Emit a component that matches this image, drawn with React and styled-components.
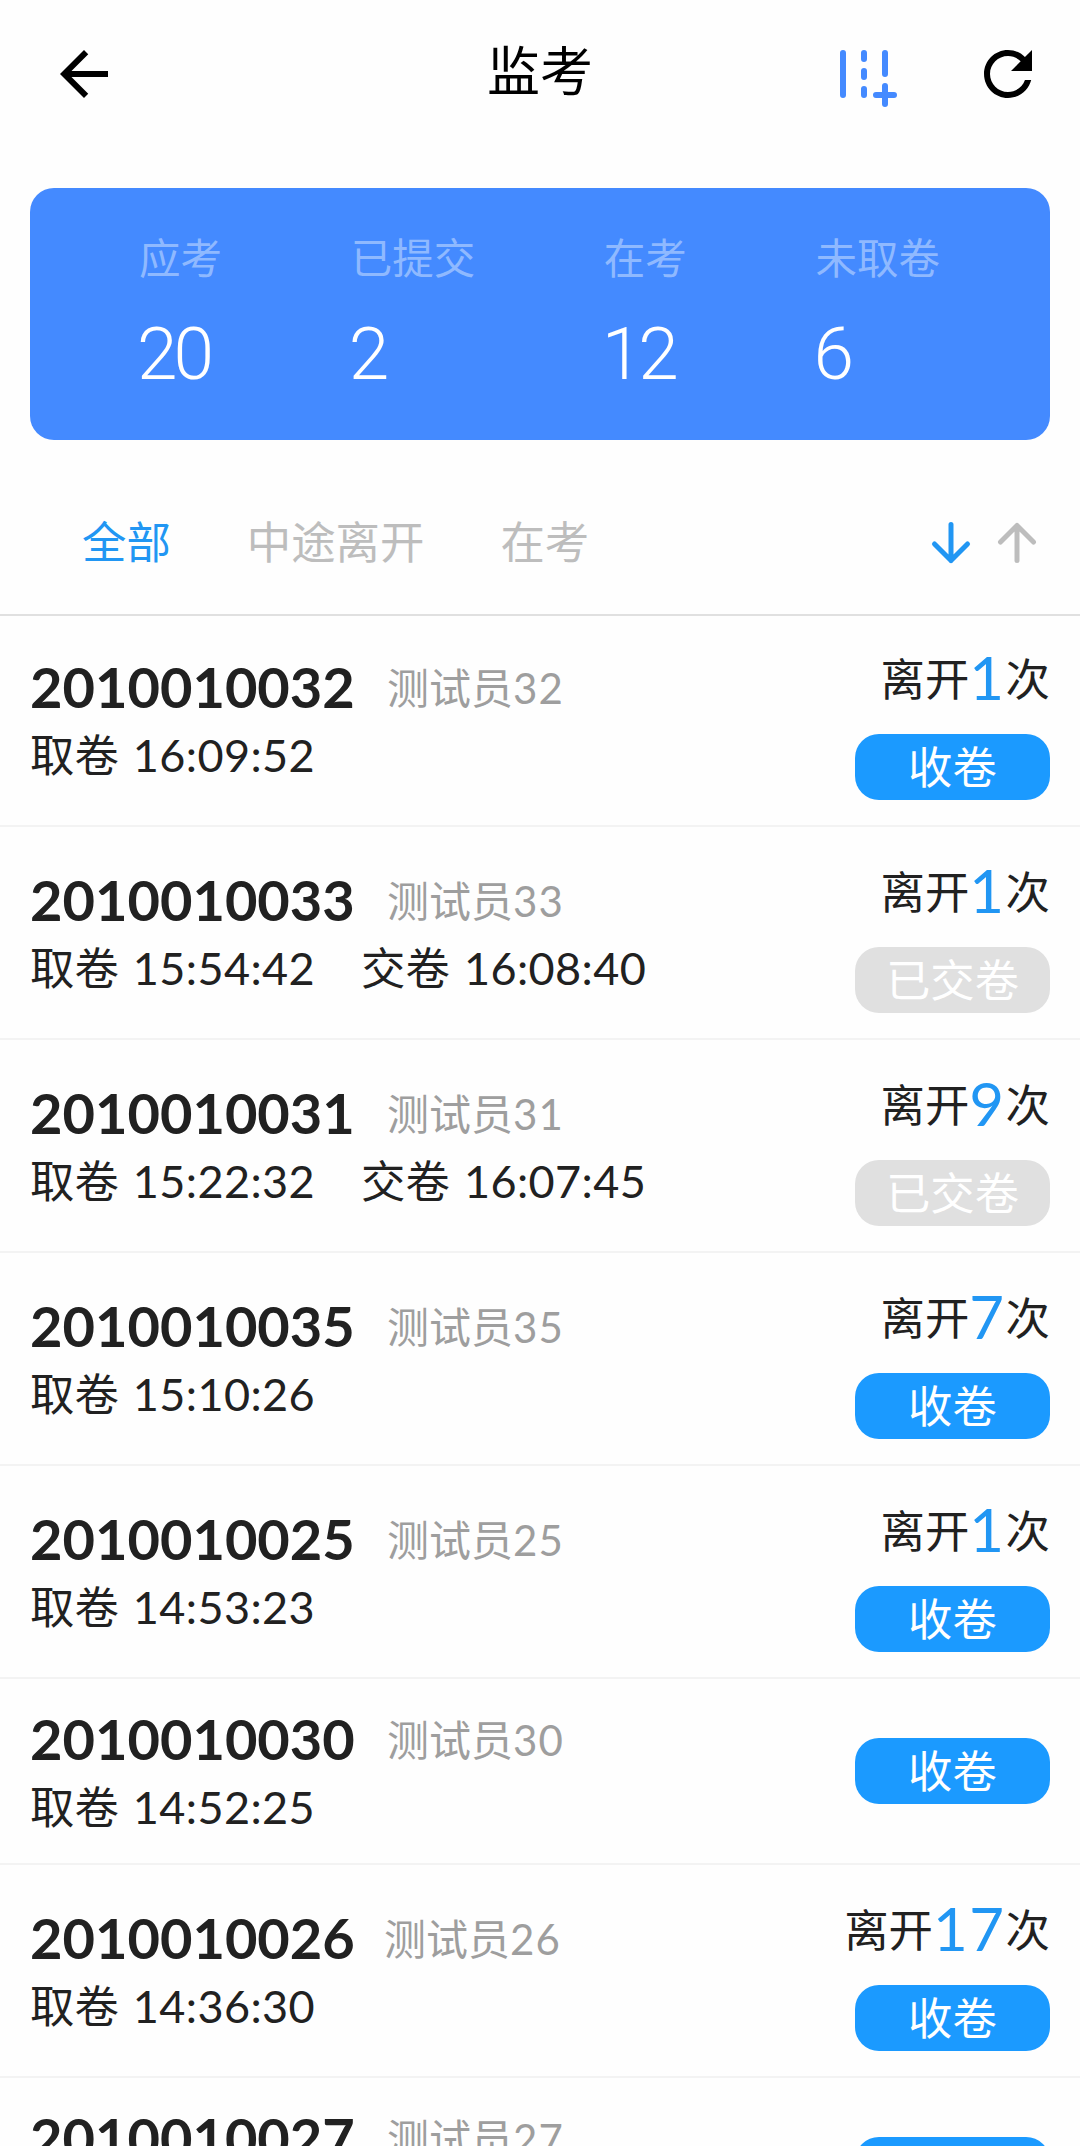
import React from 'react';
import styled, { createGlobalStyle } from 'styled-components';

const GlobalStyle = createGlobalStyle`
  * { box-sizing: border-box; }
  body {
    margin: 0;
    background: #fefefe;
    color: #212121;
    font-family: Lato, 'Noto Sans CJK SC', sans-serif;
    font-size: 44.4px;
    overflow: hidden;
  }
`;

const exams = [
  { id: '2010010032', name: '测试员', no: '32', taken: '16:09:52', left: 1 },
  { id: '2010010033', name: '测试员', no: '33', taken: '15:54:42', submitted: '16:08:40', left: 1 },
  { id: '2010010031', name: '测试员', no: '31', taken: '15:22:32', submitted: '16:07:45', left: 9 },
  { id: '2010010035', name: '测试员', no: '35', taken: '15:10:26', left: 7 },
  { id: '2010010025', name: '测试员', no: '25', taken: '14:53:23', left: 1 },
  { id: '2010010030', name: '测试员', no: '30', taken: '14:52:25', left: 0 },
  { id: '2010010026', name: '测试员', no: '26', taken: '14:36:30', left: 17 },
  { id: '2010010027', name: '测试员', no: '27', taken: '14:35:12', left: 0 },
];

const stats = [
  { label: '应考', value: 20 },
  { label: '已提交', value: 2 },
  { label: '在考', value: 12 },
  { label: '未取卷', value: 6 },
];

const tabs = ['全部', '中途离开', '在考'];

const Page = styled.div`
  height: 2146px;
  overflow: hidden;
`;

// --- Top bar ---
const TopBar = styled.header`
  display: grid;
  grid-template-columns: 1fr auto 1fr;
  align-items: center;
  height: 148px;
  padding: 0 36px 0 48px;
`;

const Title = styled.h1`
  margin: 0;
  padding: 0 12px 6px 0;
  color: #000;
  font-size: 53px;
  font-weight: 400;
  line-height: 76px;
`;

const Actions = styled.div`
  display: flex;
  justify-content: flex-end;
  gap: 72px;
`;

const Icon = styled.svg`
  display: block;
  width: 72px;
  height: 72px;
`;

// --- Summary card ---
const Summary = styled.section`
  display: flex;
  justify-content: space-between;
  height: 252px;
  margin: 40px 30px 0;
  padding: 39px 110px 0 109px;
  border-radius: 24px;
  background: #448aff;
`;

const StatLabel = styled.div`
  color: #8fb9ff;
  font-size: 41.5px;
  line-height: 62px;
`;

const StatValue = styled.div`
  margin: 20px 0 0 -2px;
  color: #fff;
  font-family: Roboto, sans-serif;
  font-size: 73px;
  font-weight: 300;
  letter-spacing: -4px;
  line-height: 90px;
`;

// --- Filter tabs ---
const TabBar = styled.nav`
  display: flex;
  align-items: center;
  height: 176px;
  padding: 30px 29px 0 82px;
  border-bottom: 2px solid #e0e0e0;
`;

const Tab = styled.span`
  margin-right: 76px;
  color: ${({ $active }) => ($active ? '#2196f3' : '#bdbdbd')};
  line-height: 64px;
`;

const Sort = styled.div`
  display: flex;
  gap: 10px;
  margin-left: auto;
  padding-right: 6px;
`;

const SortIcon = styled.svg`
  display: block;
  width: 56px;
  height: 56px;
  fill: none;
  stroke: ${({ $active }) => ($active ? '#2196f3' : '#bdbdbd')};
  stroke-width: 5;
  stroke-linecap: round;
  stroke-linejoin: round;
`;

// --- Exam list ---
const List = styled.main`
  margin-top: -2px;
`;

const Row = styled.article`
  display: flex;
  align-items: center;
  justify-content: space-between;
  height: ${({ $short }) => ($short ? 186 : 213)}px;
  padding: 0 30px;
  border-bottom: 2px solid #f3f3f3;
`;

const Info = styled.div`
  height: 135px;
`;

const Heading = styled.div`
  height: 70px;
  line-height: 69px;
  white-space: nowrap;
`;

const ExamId = styled.span`
  display: inline-block;
  width: 325px;
  font-size: 56px;
  font-weight: 700;
`;

const Name = styled.span`
  margin-left: ${({ $tight }) => ($tight ? 29 : 32)}px;
  color: #9e9e9e;
  font-size: 42px;
  line-height: 1;
  vertical-align: 4px;
`;

const NameNo = styled.span`
  letter-spacing: 1.2px;
`;

const Times = styled.div`
  display: flex;
  gap: 46px;
  height: 64px;
  line-height: 66px;
`;

const Clock = styled.span`
  margin-left: 14px;
  font-size: 45px;
  letter-spacing: 0.4px;
`;

const Side = styled.div`
  display: flex;
  flex-direction: column;
  align-items: flex-end;
  padding-top: ${({ $short }) => ($short ? 0 : 9)}px;
`;

const Leaves = styled.div`
  display: flex;
  align-items: center;
  height: 62px;
  margin-bottom: 24px;
  line-height: 62px;
`;

const Count = styled.span`
  margin-top: -4px;
  color: #2196f3;
  font-size: 60px;
  letter-spacing: 1.5px;
`;

const Button = styled.button`
  width: 195px;
  height: 66px;
  padding: 0;
  border: 0;
  border-radius: 24px;
  background: ${({ $done }) => ($done ? '#e0e0e0' : '#1b9aff')};
  color: #fff;
  font: inherit;
  line-height: 64px;
`;

const ExamRow = ({ exam }) => (
  <Row $short={!exam.left}>
    <Info>
      <Heading>
        <ExamId>{exam.id}</ExamId>
        <Name $tight={exam.no.endsWith('6')}>{exam.name}<NameNo>{exam.no}</NameNo></Name>
      </Heading>
      <Times>
        <div>取卷<Clock>{exam.taken}</Clock></div>
        {exam.submitted && <div>交卷<Clock>{exam.submitted}</Clock></div>}
      </Times>
    </Info>
    <Side $short={!exam.left}>
      {exam.left > 0 && <Leaves>离开<Count>{exam.left}</Count>次</Leaves>}
      <Button $done={!!exam.submitted}>{exam.submitted ? '已交卷' : '收卷'}</Button>
    </Side>
  </Row>
);

const App = () => (
  <Page>
    <GlobalStyle />
    <TopBar>
      <Icon viewBox="0 0 24 24">
        <path d="M20 11H7.83l5.59-5.59L12 4l-8 8 8 8 1.41-1.41L7.83 13H20v-2z" />
      </Icon>
      <Title>监考</Title>
      <Actions>
        <Icon viewBox="0 0 24 24" fill="none" stroke="#448aff" strokeWidth="2" strokeLinecap="round">
          <path d="M5 5v14M12 5v2M12 11v2M12 17v2M19 5v7M19 16v6M16 19h6" />
        </Icon>
        <Icon viewBox="0 0 24 24">
          <path d="M17.65 6.35C16.2 4.9 14.21 4 12 4c-4.42 0-7.99 3.58-7.99 8s3.57 8 7.99 8c3.73 0 6.84-2.55 7.73-6h-2.08c-.82 2.33-3.04 4-5.65 4-3.31 0-6-2.69-6-6s2.69-6 6-6c1.66 0 3.14.69 4.22 1.78L13 11h7V4l-2.35 2.35z" />
        </Icon>
      </Actions>
    </TopBar>

    <Summary>
      {stats.map(s => (
        <div key={s.label}>
          <StatLabel>{s.label}</StatLabel>
          <StatValue>{s.value}</StatValue>
        </div>
      ))}
    </Summary>

    <TabBar>
      {tabs.map((t, i) => <Tab key={t} $active={i === 0}>{t}</Tab>)}
      <Sort>
        <SortIcon $active viewBox="0 0 56 56">
          <path d="M28 10.5v36M11.5 30L28 46.5 44.5 30" />
        </SortIcon>
        <SortIcon viewBox="0 0 56 56">
          <path d="M28 46.5v-35M11.5 28L28 11.5 44.5 28" />
        </SortIcon>
      </Sort>
    </TabBar>

    <List>
      {exams.map(exam => <ExamRow key={exam.id} exam={exam} />)}
    </List>
  </Page>
);

export default App;
